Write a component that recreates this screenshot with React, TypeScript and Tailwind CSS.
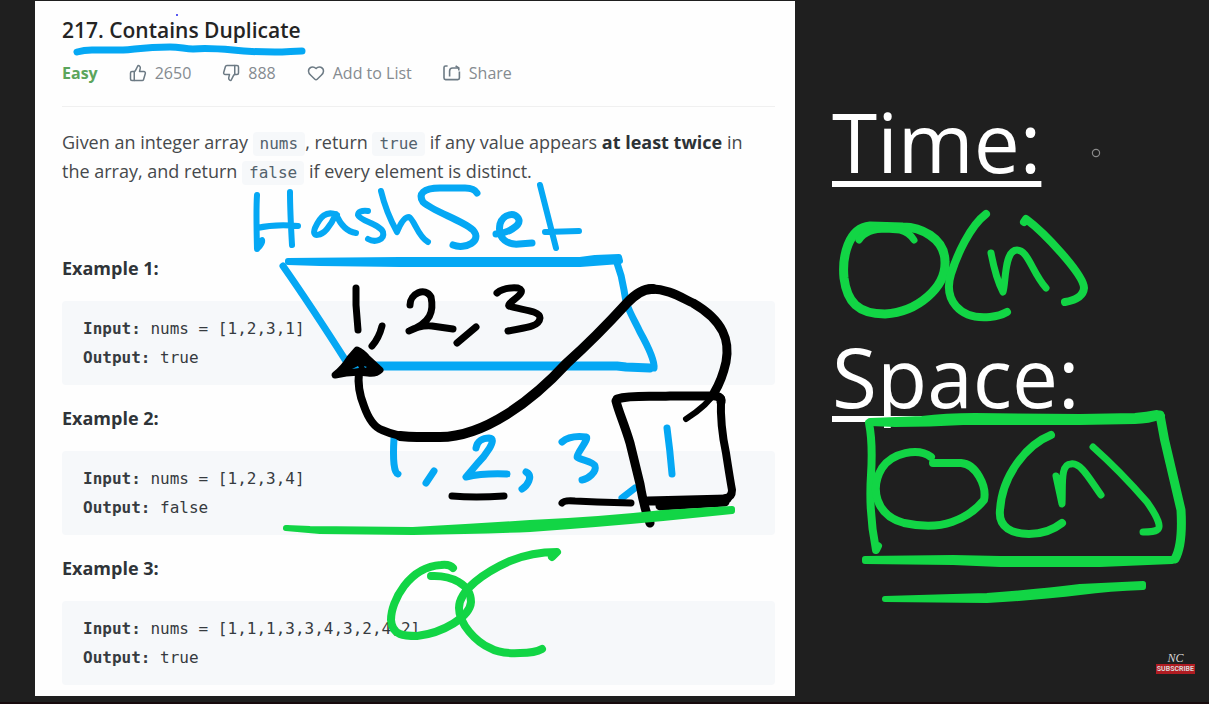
import type { ReactNode } from "react";
import { Heart, ThumbsDown, ThumbsUp } from "lucide-react";

const BLUE = "#05a8f4";
const GREEN = "#12d545";
const BLACK = "#000000";

type Stroke = { d: string; w: number; c: string };

const blueStrokes: Stroke[] = [
  { c: BLUE, w: 7, d: "M77 52Q84 50 92 50L123 50C137 49 145 47 170 47C180 47 185 49 193 49C203 48 222 49 233 50C250 52 262 52 275 52C287 52 293 51 302 51" },
  { c: BLUE, w: 6, d: "M257 195Q256 210 257 249M258 248Q263 243 262 240M290 192Q290 210 292 245M257 228Q275 224 298 226" },
  { c: BLUE, w: 6, d: "M337 215C326 210 320 217 315 228C311 239 322 235 327 229Q332 223 336 214Q343 231 356 233" },
  { c: BLUE, w: 6, d: "M368 211Q358 210 358 215C360 221 380 224 383 232C385 240 375 243 368 239" },
  { c: BLUE, w: 6, d: "M381 191Q386 212 397 232Q403 217 409 217C414 219 418 237 428 242" },
  { c: BLUE, w: 7, d: "M477 193Q474 188 465 188L440 188C423 188 418 194 423 202C434 212 462 220 473 230C483 241 465 250 453 245" },
  { c: BLUE, w: 7, d: "M496 234C508 233 520 226 519 220C516 211 503 214 500 224C497 240 509 245 519 244L532 243" },
  { c: BLUE, w: 6, d: "M540 185Q548 217 556 248M545 232L579 231" },
  { c: BLUE, w: 7, d: "M283 266Q311 306 346 361" },
  { c: BLUE, w: 9, d: "M370 366L617 366L626 367L650 368" },
  { c: BLUE, w: 7, d: "M617 263Q622 276 624 290C626 308 633 317 640 332Q655 359 654 368" },
  { c: BLUE, w: 7, d: "M394 438Q392 472 398 474M434 471L426 483M476 448C477 441 483 438 489 438C499 438 484 457 477 464L466 477Q483 473 507 474M526 472C534 476 527 486 522 489" },
  { c: BLUE, w: 7, d: "M562 442Q570 435 586 437C590 438 576 454 577 457C580 460 593 461 595 466C597 472 588 479 582 480M635 488L622 498M667 428Q670 450 672 474" },
];

const blackStrokes: Stroke[] = [
  { c: BLACK, w: 7, d: "M356 288L356 305L358 330M382 326Q379 338 372 346" },
  { c: BLACK, w: 7, d: "M410 305C410 294 425 286 431 297C434 311 431 323 409 331Q420 325 432 326L453 329M476 327L457 343" },
  { c: BLACK, w: 7, d: "M497 293Q504 287 518 288C530 292 506 303 509 306C519 310 540 310 540 318C539 328 521 328 508 331" },
  { c: BLACK, w: 8, d: "M359 372Q357 389 364 406Q371 426 382 430Q396 436 410 437" },
  { c: BLACK, w: 10, d: "M400 436Q409 437 417 437L440 437C484 437 532 401 567 363Q596 337 627 303Q641 288 653 289" },
  { c: BLACK, w: 9, d: "M649 289C667 288 682 298 693 303C724 321 730 341 726 362Q722 380 714 393" },
  { c: BLACK, w: 6, d: "M715 392Q708 405 686 419" },
  { c: BLACK, w: 9, d: "M617 399C631 395 647 397 670 396L710 396Q722 395 721 402" },
  { c: BLACK, w: 9, d: "M616 401C619 413 624 423 630 443L640 484Q644 508 650 523" },
  { c: BLACK, w: 8, d: "M721 399Q720 425 726 453Q730 479 732 490Q732 497 726 498" },
  { c: BLACK, w: 9, d: "M648 501L727 499M660 506L725 502" },
  { c: BLACK, w: 7, d: "M452 496Q475 498 504 496M562 503Q564 500 575 501L597 502L631 503" },
];

const countStrokes: Stroke[] = [
  { c: GREEN, w: 8, d: "M453 568Q450 564 441 565C409 567 391 601 391 620C392 636 405 636 417 636C443 633 470 617 471 602C471 584 451 575 431 576" },
  { c: GREEN, w: 8, d: "M552 557L557 552Q532 552 510 561C485 572 459 590 459 608C459 624 476 642 490 648Q500 654 520 653Q535 653 542 649" },
];

const timeStrokes: Stroke[] = [
  { c: GREEN, w: 9, d: "M870 226C848 228 842 257 844 278C847 302 858 314 885 314C918 312 946 287 945 262C945 237 919 227 903 227Z" },
  { c: GREEN, w: 7, d: "M859 240Q866 229 886 229L900 230Q909 232 914 240" },
  { c: GREEN, w: 8, d: "M986 214C970 226 957 255 951 274C943 300 960 320 990 317Q1000 316 1007 312" },
  { c: GREEN, w: 7, d: "M991 253Q996 279 1003 292C1006 283 1004 250 1017 250C1028 250 1032 272 1046 288" },
  { c: GREEN, w: 8, d: "M1024 222L1026 219C1045 233 1084 275 1084 288Q1083 299 1065 302" },
];

const spaceStrokes: Stroke[] = [
  { c: GREEN, w: 8, d: "M869 423Q873 443 871 475C869 505 872 530 876 550L878 546" },
  { c: GREEN, w: 9, d: "M1160 415Q1164 440 1170 463L1181 510Q1183 545 1175 559" },
  { c: GREEN, w: 8, d: "M931 457C918 447 892 453 882 468C870 488 875 515 904 523Q932 529 952 522Q972 515 984 500C987 486 976 464 961 463L933 463" },
  { c: GREEN, w: 8, d: "M1051 435C1026 445 1002 476 1000 510C998 528 1013 534 1029 534Q1048 534 1062 523" },
  { c: GREEN, w: 7, d: "M1056 476L1062 504C1063 485 1060 464 1071 464C1081 462 1090 480 1101 495" },
  { c: GREEN, w: 7, d: "M1093 447Q1120 471 1147 502Q1164 526 1157 530Q1154 532 1143 532" },
];

function Ink({ strokes }: { strokes: Stroke[] }) {
  return (
    <g fill="none" strokeLinecap="round" strokeLinejoin="round">
      {strokes.map((s) => (
        <path key={s.d} d={s.d} stroke={s.c} strokeWidth={s.w} />
      ))}
    </g>
  );
}

/* A stroke whose thickness changes along its length, given as its outline. */
function Blob({ d, c }: { d: string; c: string }) {
  return <path d={d} fill={c} stroke={c} strokeWidth="6" strokeLinejoin="round" />;
}

function Code({ children }: { children: ReactNode }) {
  return (
    <code className="inline-block rounded bg-[#f6f8fa] px-[7px] font-['DejaVu_Sans_Mono',monospace] text-[16px] leading-[24px] text-[#53626d]">
      {children}
    </code>
  );
}

function ShareIcon() {
  return (
    <svg viewBox="0 0 18 18" className="size-[18px]" fill="none" stroke="currentColor" strokeWidth="1.6" aria-hidden="true">
      <path d="M4.6 2H2.6Q1 2 1 3.6V14Q1 15.6 2.6 15.6H14.8Q16.4 15.6 16.4 14V7.5" />
      <path d="M6.6 12.6V7Q6.6 4 9.6 4H15.6" />
      <path d="M12.6 1.8L15.8 4L15.8 6.4" />
    </svg>
  );
}

function Action({ icon, label, name }: { icon: ReactNode; label: string; name?: string }) {
  return (
    <button type="button" aria-label={name} className="flex items-center gap-2 text-[#6c7a84]">
      {icon}
      <span className="text-[#858b90]">{label}</span>
    </button>
  );
}

const examples = [
  { input: "[1,2,3,1]", output: "true" },
  { input: "[1,2,3,4]", output: "false" },
  { input: "[1,1,1,3,3,4,3,2,4,2]", output: "true" },
];

export default function App() {
  return (
    <main className="grid min-h-screen grid-cols-[minmax(0,760fr)_minmax(0,414fr)] border-b-2 border-[#170b0d] bg-[#1f1f1f] pl-[35px] font-['Open_Sans',sans-serif]">
      <article className="relative mt-px self-start bg-[#fefefe] pt-[15px] pr-[20px] pb-[11px] pl-[27px] text-[#46494c]">
        <h1 className="text-[21px] leading-7 font-semibold text-[#242424]">217. Contains Duplicate</h1>
        <div className="mt-[17px] flex h-6 items-center gap-[31px] text-[16px]">
          <span className="font-bold text-[#5ba55b]">Easy</span>
          <Action name="Like, 2650" label="2650" icon={<ThumbsUp size={18} strokeWidth={2} />} />
          <Action name="Dislike, 888" label="888" icon={<ThumbsDown size={18} strokeWidth={2} />} />
          <Action label="Add to List" icon={<Heart size={18} strokeWidth={2} />} />
          <Action label="Share" icon={<ShareIcon />} />
        </div>
        <hr className="mt-[21px] border-[#f0f0f0]" />
        <p className="mt-[21px] mb-[68px] pr-6 text-[18px] leading-[29px]">
          Given an integer array <Code>nums</Code>, return <Code>true</Code> if any value appears{" "}
          <strong className="text-[#2c3236]">at least twice</strong> in the array, and return <Code>false</Code> if every
          element is distinct.
        </p>
        <div className="flex flex-col gap-[19px]">
          {examples.map((e, i) => (
            <section key={e.input}>
              <h2 className="text-[18px] leading-[29px] font-bold text-[#2f3438]">Example {i + 1}:</h2>
              <pre className="mt-[18px] rounded bg-[#f6f8fa] px-[21px] py-[13px] font-['DejaVu_Sans_Mono',monospace] text-[16px] leading-[29px] text-[#363b3f]">
                <b>Input:</b> nums = {e.input}
                {"\n"}
                <b>Output:</b> {e.output}
              </pre>
            </section>
          ))}
        </div>
        <svg
          viewBox="35 1 760 695"
          preserveAspectRatio="xMinYMin meet"
          className="pointer-events-none absolute inset-0 size-full"
          aria-hidden="true"
        >
          <circle cx="177" cy="15" r="1" fill="#2222ee" />
          <Ink strokes={blueStrokes} />
          <Blob c={BLUE} d="M288 261L400 260L533 260L580 260L595 258L619 257L620 261L580 264L400 264L320 263L288 262Z" />
          <Ink strokes={blackStrokes} />
          <path
            d="M357 350Q362 352 367 358L380 370Q376 374 368 373Q352 371 335 375Q344 368 350 358Z"
            fill={BLACK}
            stroke={BLACK}
            strokeWidth="7"
            strokeLinejoin="round"
          />
          <path d="M352 369L358 366L359 368ZM364 366L367 367L365 368Z" fill={BLUE} />
          <Blob
            c={GREEN}
            d="M286 528L310 529L413 530Q470 527 530 523Q600 520 663 513L732 509L732 511L663 518Q600 524 530 529Q480 531 413 532L320 531Z"
          />
          <Ink strokes={countStrokes} />
        </svg>
      </article>

      <aside className="relative flex flex-col pt-[85px] pl-[37px] text-[82px] leading-[112px] text-white">
        <h2 className="self-start underline decoration-[6px] underline-offset-[8px] [text-decoration-skip-ink:none]">Time:</h2>
        <h2 className="mt-[123px] self-start underline decoration-[6px] underline-offset-[8px] [text-decoration-skip-ink:none]">
          Space:
        </h2>
        <svg
          viewBox="795 0 414 702"
          preserveAspectRatio="xMinYMin meet"
          className="pointer-events-none absolute inset-0 size-full"
          aria-hidden="true"
        >
          <circle cx="1096" cy="153" r="3.6" fill="none" stroke="#8a8a8a" strokeWidth="1.2" />
          <Ink strokes={timeStrokes} />
          <Ink strokes={spaceStrokes} />
          <Blob
            c={GREEN}
            d="M870 421L922 419Q945 416 975 416L1080 417L1135 416Q1147 415 1157 413L1162 416Q1148 421 1135 421L1080 422L963 422Q930 424 895 424L870 423Z"
          />
          <Blob c={GREEN} d="M865 559L953 558L1000 559L1174 559L1172 561L1100 564L1000 564L953 562L865 561Z" />
          <Blob
            c={GREEN}
            d="M885 599L987 596Q1040 592 1080 587L1143 584L1143 587Q1110 588 1080 592Q1040 597 987 600Z"
          />
        </svg>
        <a href="#subscribe" className="mt-auto mr-[14px] mb-[28px] flex flex-col items-center self-end text-[#d8d8d8]">
          <span className="font-['Liberation_Serif',serif] text-[12px] leading-[12px] italic">NC</span>
          <span className="bg-[#b01c22] px-px font-['Roboto',sans-serif] text-[7px] leading-[10px] font-bold">SUBSCRIBE</span>
        </a>
      </aside>
    </main>
  );
}
